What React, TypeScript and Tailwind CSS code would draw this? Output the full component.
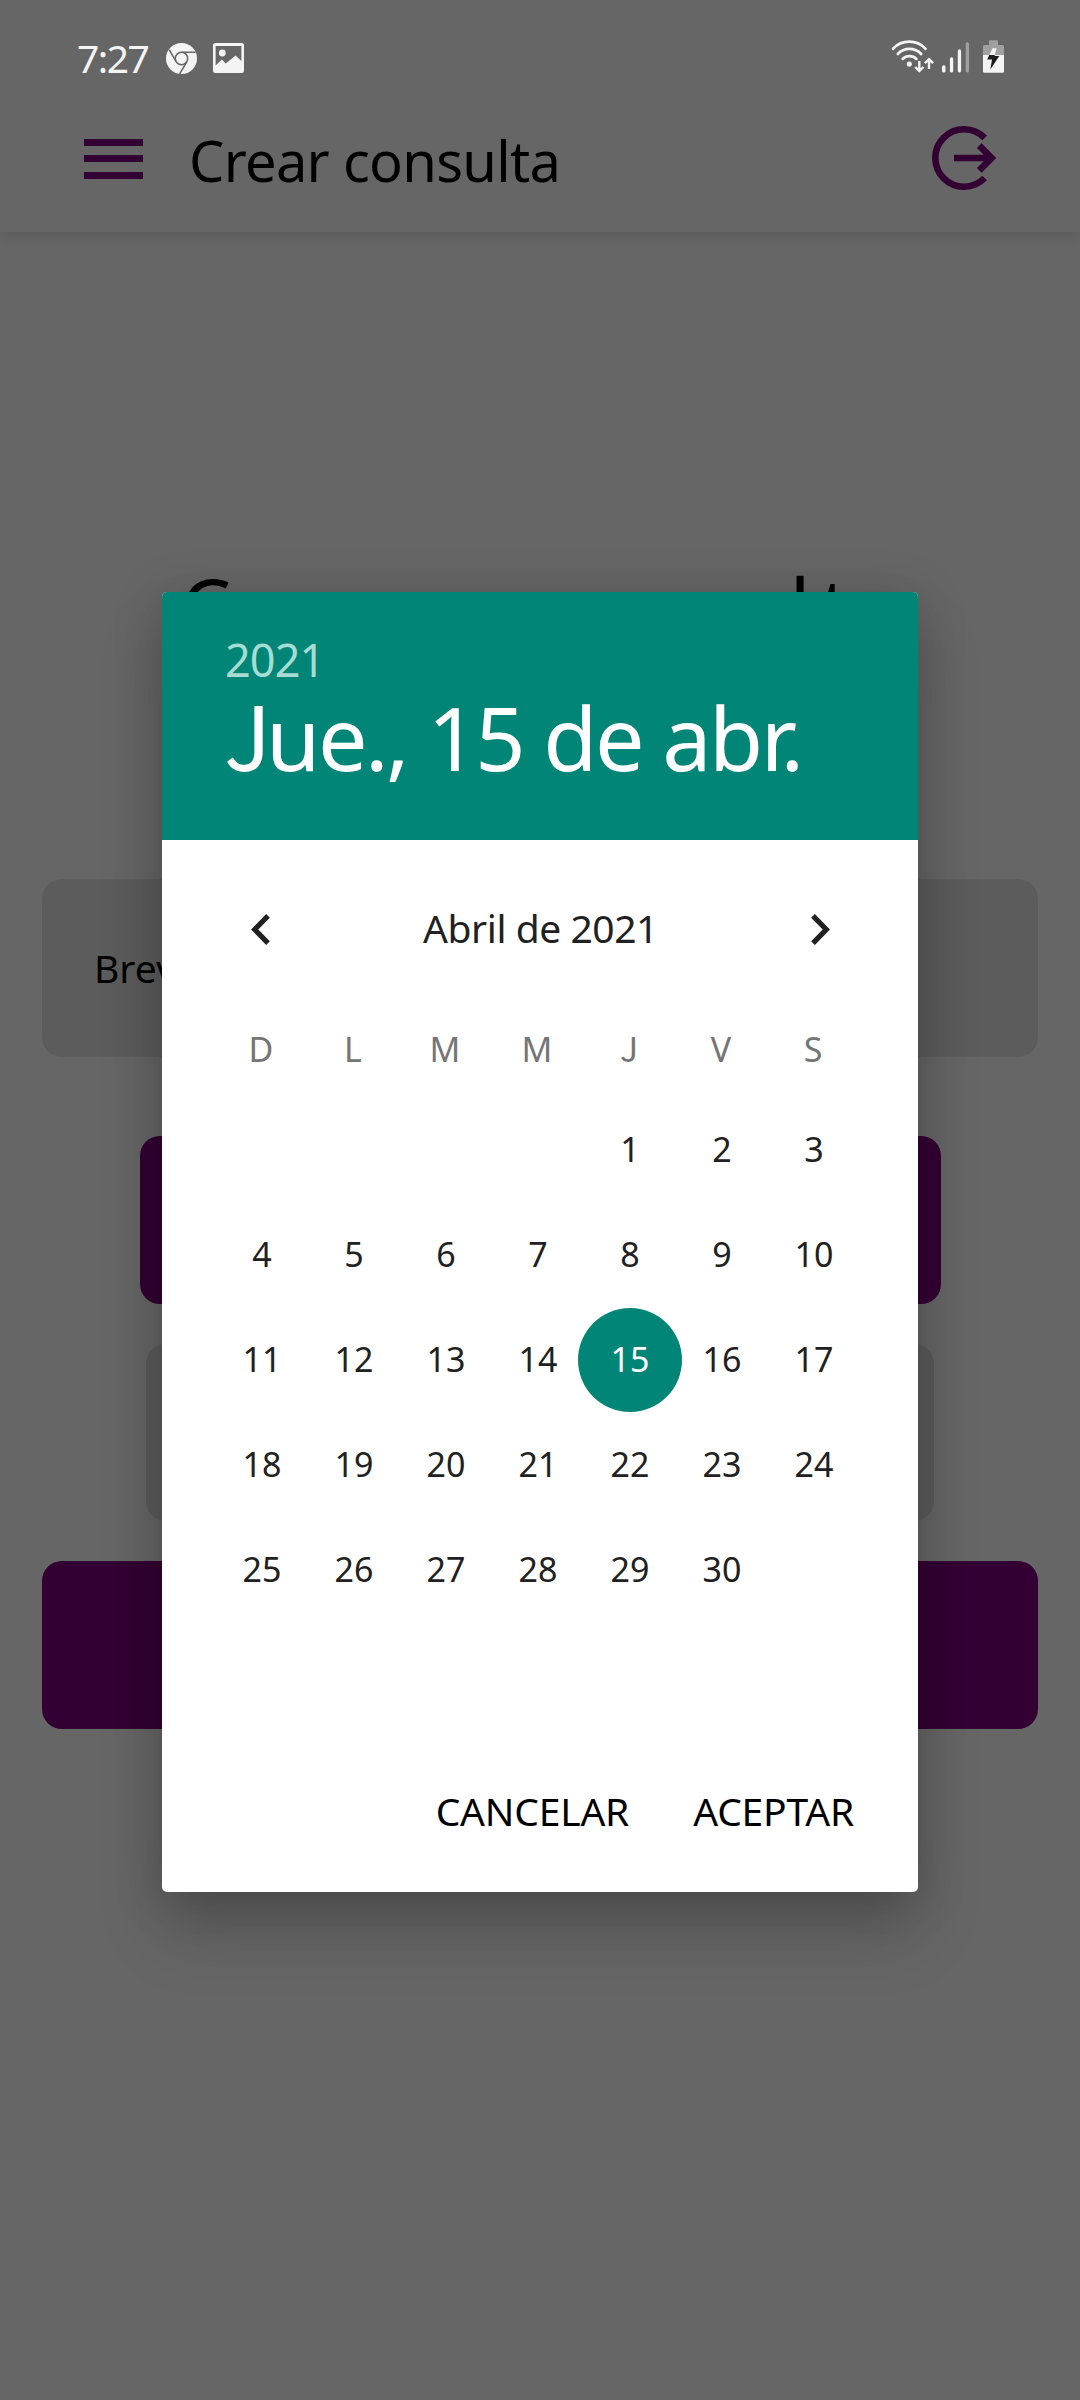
const WEEKDAYS = ["D", "L", "M", "M", "J", "V", "S"];
const FIRST_WEEKDAY = 4;
const DAYS_IN_MONTH = 30;
const SELECTED_DAY = 15;

function ChromeIcon() {
  return (
    <svg width="31" height="31" viewBox="0 0 31 31" fill="none">
      <circle cx="15.5" cy="15.5" r="15.5" fill="#f4f4f4" />
      <circle cx="15.5" cy="15.5" r="6.2" stroke="#666666" strokeWidth="1.5" />
      <path d="M15.5 9.3H29.5M10.1 18.6L3.2 6.6M20.9 18.6L13.6 31" stroke="#666666" strokeWidth="1.5" />
    </svg>
  );
}

function PictureIcon() {
  return (
    <svg width="31" height="30" viewBox="0 0 31 30">
      <path
        fill="#f4f4f4"
        fillRule="evenodd"
        d="M2.5 0H28.5Q31 0 31 2.5V27.5Q31 30 28.5 30H2.5Q0 30 0 27.5V2.5Q0 0 2.5 0ZM2.6 3V22.5L8.9 16.5L12.7 20.5L22.7 12.5L28.4 18V3Z"
      />
      <circle cx="9.3" cy="10" r="3.4" fill="#f4f4f4" />
    </svg>
  );
}

function SystemIcons() {
  return (
    <svg width="116" height="38" viewBox="10 9 116 38" fill="none">
      <g stroke="#f4f4f4" strokeWidth="2.7" strokeLinecap="round">
        <path d="M13 18.7A22.4 22.4 0 0 1 45.5 18.7" />
        <path d="M17.8 24A16 16 0 0 1 41.2 24" />
        <path d="M22.6 28.9A10 10 0 0 1 36.4 28.9" />
      </g>
      <circle cx="29.3" cy="34.1" r="2.6" fill="#f4f4f4" />
      <g stroke="#f4f4f4" strokeWidth="2.4">
        <path d="M39.3 31V40.5M35.2 37L39.3 41.1L43.4 37" />
        <path d="M49 39V29.5M44.9 33.2L49 29.1L53.1 33.2" />
      </g>
      <g fill="#f4f4f4">
        <rect x="62" y="35.3" width="3.5" height="7.2" rx="1.6" />
        <rect x="69.9" y="27.3" width="3.3" height="15.2" rx="1.6" />
        <rect x="77.8" y="19.3" width="3.3" height="23.2" rx="1.6" />
        <rect x="85.7" y="12.3" width="3.3" height="30.2" rx="1.6" fill="#9f9f9f" />
      </g>
      <path d="M109 15V11.2Q109 10.2 110 10.2H117Q118 10.2 118 11.2V15H122.5Q124 15 124 16.5V25H103V16.5Q103 15 104.5 15Z" fill="#a0a0a0" />
      <path d="M103 25H124V41.3Q124 42.8 122.5 42.8H104.5Q103 42.8 103 41.3Z" fill="#f4f4f4" />
      <path d="M112.6 18.3H116.6L114.8 25H109.4Z" fill="#f4f4f4" />
      <path d="M109.2 25L107.2 29.6H112L110.3 39.6L119.3 26H114.5L114.8 25Z" fill="#1c1c1c" />
    </svg>
  );
}

function LogoutIcon() {
  return (
    <svg width="66" height="66" viewBox="-32 -33 66 66" fill="none" stroke="#330033" strokeWidth="6.6">
      <path d="M20.6 -20A28.7 28.7 0 1 0 20.6 20" />
      <path d="M-10 0H27M15.3 -12.4L27.6 0L15.3 12.4" />
    </svg>
  );
}

function Chevron({ flipped = false }: { flipped?: boolean }) {
  return (
    <svg
      width="19"
      height="31"
      viewBox="0 0 19 31"
      fill="none"
      stroke="#212121"
      strokeWidth="5.2"
      className={flipped ? "-scale-x-100" : ""}
    >
      <path d="M17 1.9L3.7 15.5L17 29.1" />
    </svg>
  );
}

/* The letter J sits on the baseline, unlike the base font's descending one. */
function J({ className = "" }: { className?: string }) {
  return <span className={`font-['Noto_Sans_CJK_SC'] leading-[0] ${className}`}>J</span>;
}

function DatePicker() {
  const cells = [
    ...Array.from({ length: FIRST_WEEKDAY }, () => 0),
    ...Array.from({ length: DAYS_IN_MONTH }, (_, i) => i + 1),
  ];
  return (
    <div className="absolute top-[592px] left-[162px] flex h-[1300px] w-[756px] flex-col overflow-hidden rounded-[5px] bg-white shadow-[0_42px_64px_rgba(0,0,0,0.17),0_6px_50px_rgba(0,0,0,0.18)]">
      <div className="h-[248px] bg-[#008577] pt-[39px] pl-[62px] whitespace-nowrap">
        <div className="pl-px text-[45px] leading-[57px] tracking-[-0.9px] text-[#a6dcd4]">2021</div>
        <div className="text-[88px] leading-[98px] tracking-[-2.55px] text-white">
          <J className="tracking-[-5px]" />
          ue., 15 de abr.
        </div>
      </div>
      <div className="flex h-[178px] items-center justify-between pr-[88px] pl-[89px]">
        <Chevron />
        <span className="-mt-[2px] text-[39px] leading-[60px] tracking-[-0.45px] text-[#212121]">Abril de 2021</span>
        <Chevron flipped />
      </div>
      <div className="grid h-[62px] grid-cols-7 items-center pr-[59px] pl-[53px] text-center text-[34px] leading-[62px] text-[#757575]">
        {WEEKDAYS.map((d, i) => (
          <span key={i}>{d === "J" ? <J /> : d}</span>
        ))}
      </div>
      <div className="mt-[17px] grid auto-rows-[105px] grid-cols-7 pr-[58px] pl-[54px] text-[34px] leading-[40px] text-[#212121]">
        {cells.map((day, i) => (
          <div key={i} className="flex items-center justify-center">
            {day === SELECTED_DAY ? (
              <span className="-mx-2 flex size-[104px] shrink-0 items-center justify-center rounded-full bg-[#008577] pb-[2px] text-white">
                {day}
              </span>
            ) : (
              <span className="pb-[2px]">{day || ""}</span>
            )}
          </div>
        ))}
      </div>
      <div className="mt-auto flex h-[162px] items-center justify-end gap-[64px] pr-[64px] text-[39px] leading-[60px] tracking-[-0.2px] text-black">
        <button>CANCELAR</button>
        <button>ACEPTAR</button>
      </div>
    </div>
  );
}

export default function App() {
  return (
    <div className="relative h-[2400px] w-[1080px] overflow-hidden bg-[#666666] font-['Noto_Sans',sans-serif] text-black">
      <header className="h-[232px] shadow-[0_4px_12px_rgba(0,0,0,0.12)]">
        <div className="flex h-[116px] items-center pr-[74px] pl-[77px]">
          <span className="-mt-px text-[39px] leading-[56px] tracking-[-1.5px] text-[#f4f4f4]">7:27</span>
          <div className="ml-[18px] flex grow items-center gap-4">
            <ChromeIcon />
            <PictureIcon />
          </div>
          <SystemIcons />
        </div>
        <div className="flex h-[84px] items-center pr-[82px] pl-[84px]">
          <div className="mt-px flex w-[59px] flex-col gap-[9.5px]">
            <span className="h-[7px] bg-[#330033]" />
            <span className="h-[7px] bg-[#330033]" />
            <span className="h-[7px] bg-[#330033]" />
          </div>
          <h1 className="mt-1 ml-[46px] grow text-[56px] leading-[76px] tracking-[-0.7px]">Crear consulta</h1>
          <LogoutIcon />
        </div>
      </header>
      <main className="flex flex-col items-center px-[42px] pt-[324px]">
        <h2 className="pr-[6px] text-[80px] leading-[100px] tracking-[-0.35px] whitespace-nowrap">
          Crear una consu<span className="tracking-[10px]">l</span>ta
        </h2>
        <div className="mt-[223px] flex h-[178px] w-full items-center rounded-[20px] bg-[#5c5c5c] pl-[52px] text-[39px]">
          Breve descripción
        </div>
        <div className="mt-[79px] h-[168px] w-[801px] rounded-[20px] bg-[#330033]" />
        <div className="mt-[40px] h-[177px] w-[788px] rounded-[20px] bg-[#5c5c5c]" />
        <div className="mt-[40px] h-[168px] w-full rounded-[20px] bg-[#330033]" />
      </main>
      <DatePicker />
    </div>
  );
}
